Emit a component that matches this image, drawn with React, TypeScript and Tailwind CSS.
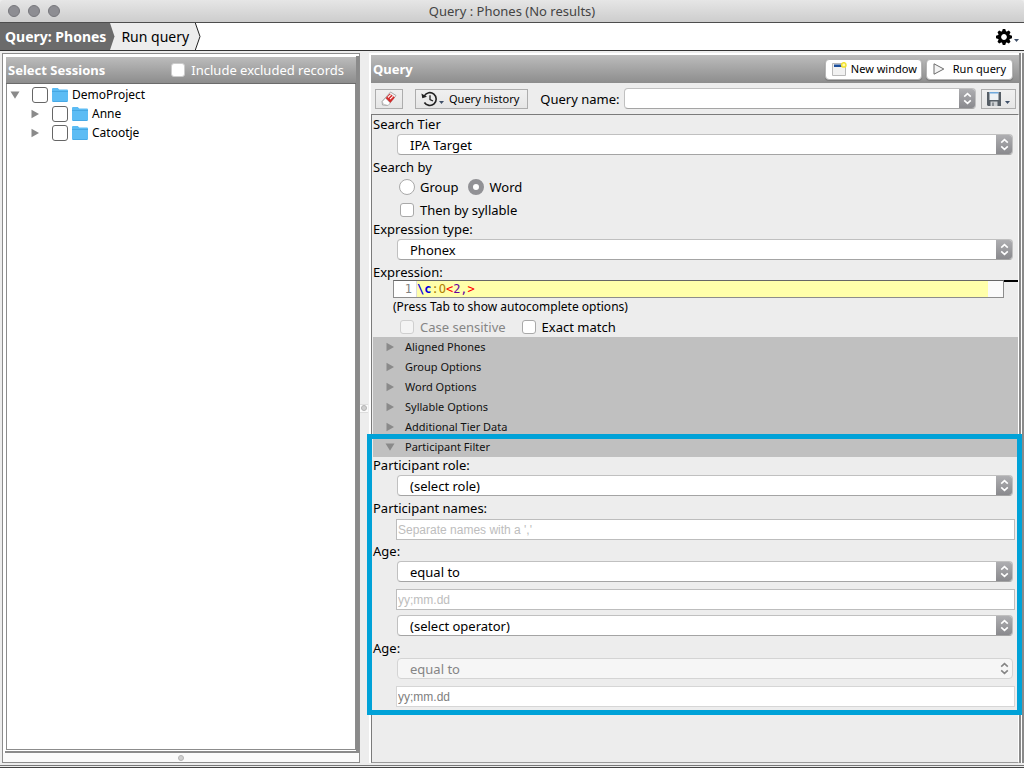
import { useState, type ReactNode } from "react";
import { clsx } from "clsx";

function ChevronPair({ className }: { className?: string }) {
  return (
    <svg width="9" height="13" viewBox="0 0 9 13" fill="none" strokeWidth="1.6" className={className}>
      <path d="M1.2 4.600 4.500 1.600 7.800 4.600M1.200 8.400l3.300 3 3.300-3" />
    </svg>
  );
}

function MenuArrow() {
  return (
    <svg width="5" height="3" viewBox="0 0 5 3" className="shrink-0">
      <path d="M0 0h5L2.500 3z" fill="#3f5069" />
    </svg>
  );
}

function Disclosure({ open }: { open?: boolean }) {
  return (
    <svg width="10" height="10" viewBox="0 0 10 10" className="shrink-0">
      <path d={open ? "M0.500 1.500h9L5 8.800z" : "M1.500 0.700v8.600L9 5z"} fill="#8a8a8a" />
    </svg>
  );
}

function Folder() {
  return (
    <svg width="16" height="14" viewBox="0 0 16 14" className="shrink-0">
      <path d="M0 1Q0 0 1 0h4.800l1.400 1.500H15q1 0 1 1V13q0 1-1 1H1q-1 0-1-1z" fill="#5cbcf4" />
      <path d="M0 3.500h16" stroke="#46a7e2" />
      <path d="M1 13.500h14" stroke="#48a9e6" />
    </svg>
  );
}

function Gear() {
  return (
    <svg width="16" height="16" viewBox="-8 -8 16 16">
      {[0, 45, 90, 135, 180, 225, 270, 315].map((angle) => (
        <path key={angle} d="M-2.200-5-1.200-8h2.400L2.200-5z" transform={`rotate(${angle})`} />
      ))}
      <circle r="4.400" fill="none" stroke="#000" strokeWidth="3" />
    </svg>
  );
}

function Eraser() {
  return (
    <svg width="18" height="16" viewBox="0 0 18 16">
      <path d="M2 10.500 10.500 1l5.500 3.500L8 14.500l-5.500-.5z" fill="#f2f2f2" stroke="#999" strokeWidth=".8" />
      <path d="M5.500 7.200 9.800 2.500l5 4L10.200 12z" fill="#d42b2b" />
      <path d="m8 6.500 2.800-2.800M10 8.200l2.800-2.800" stroke="#fff" strokeWidth="1.100" />
      <path d="m5.500 7.200 4.700 4.800L8 14.500 3 13l-.5-2.500z" fill="#fff" stroke="#aaa" strokeWidth=".6" />
    </svg>
  );
}

function History() {
  return (
    <svg width="17" height="16" viewBox="0 0 17 16" fill="none" stroke="#222" strokeWidth="1.600">
      <path d="M3.300 4.800A6.400 6.400 0 1 1 3.400 11.500" />
      <path d="M9 4.200v4.300l3 1.500" strokeWidth="1.300" />
      <path d="M.4 2.500 1.300 7.300 6 5.700z" fill="#222" stroke="none" />
    </svg>
  );
}

function WindowIcon() {
  return (
    <svg width="15" height="15" viewBox="0 0 15 15">
      <path d="M.5 1.500h13v12H.5z" fill="#f1f1f1" stroke="#b9b9b9" />
      <path d="M2 2.500h8V5H2z" fill="#1d4f9c" />
      <circle cx="11.800" cy="2.900" r="2.200" fill="#fffbb0" stroke="#f2e230" strokeWidth="1.500" />
    </svg>
  );
}

function Play() {
  return (
    <svg width="12" height="12" viewBox="0 0 12 12">
      <path d="M1 .8v10.400L10.800 6z" fill="#f4f4f4" stroke="#6d6d6d" />
    </svg>
  );
}

function Floppy() {
  return (
    <svg width="14" height="14" viewBox="0 0 14 14">
      <path d="M0 0h14v14H1l-1-1z" fill="#565e66" />
      <path d="M2.500 0h9v8h-9z" fill="#eef2f5" />
      <path d="M2.500 0h9v1.500h-9z" fill="#6fa9dc" />
      <path d="M3.500 9.500h7V14h-7z" fill="#cfd2d5" />
      <path d="M5 10.500h2V14H5z" fill="#8b9095" />
    </svg>
  );
}

function SplitterGrip() {
  return <span className="size-1.5 rounded-full border border-[#b4b4b4] bg-[#d0d0d0]" />;
}

function ComboBox({ label, options, disabled }: { label: string; options: string[]; disabled?: boolean }) {
  return (
    <div
      className={clsx(
        "flex h-[21px] min-w-0 flex-1 overflow-hidden rounded border",
        disabled ? "border-[#d4d4d4] bg-[#f6f6f6]" : "border-[#c0c0c0] border-b-[#a4a4a4] bg-white"
      )}
    >
      <select
        aria-label={label}
        disabled={disabled}
        className={clsx("min-w-0 flex-1 appearance-none pl-3 outline-none", disabled && "text-[#858585]")}
      >
        {options.map((option) => (
          <option key={option}>{option}</option>
        ))}
      </select>
      <span
        className={clsx(
          "-my-px -mr-px flex w-[17px] items-center justify-center",
          !disabled && "bg-linear-to-b from-[#b0b0b3] to-[#88888c]"
        )}
      >
        <ChevronPair className={disabled ? "stroke-[#858585]" : "stroke-white"} />
      </span>
    </div>
  );
}

function TextField({ label, placeholder, disabled }: { label: string; placeholder: string; disabled?: boolean }) {
  return (
    <input
      type="text"
      aria-label={label}
      placeholder={placeholder}
      disabled={disabled}
      className={clsx(
        "ml-[23px] mr-[3px] block h-[21px] border bg-white px-px font-['Liberation_Sans',sans-serif] text-[12px] outline-none",
        disabled ? "border-[#d6d6d6] placeholder:text-[#808080]" : "border-[#bdbdbd] placeholder:text-[#bdbdbd]"
      )}
    />
  );
}

function Row({ children }: { children: ReactNode }) {
  return <div className="flex pl-6 pr-[5px]">{children}</div>;
}

function Check({ label, disabled }: { label: string; disabled?: boolean }) {
  return (
    <label className={clsx("flex items-center gap-1.5", disabled && "text-[#858585]")}>
      <input
        type="checkbox"
        disabled={disabled}
        className="size-3.5 appearance-none rounded-[3px] border border-[#a9a9a9] bg-white checked:bg-[#8e8e92] disabled:border-[#cfcfcf] disabled:bg-[#f4f4f4]"
      />
      {label}
    </label>
  );
}

function Radio({ label, checked, onChange }: { label: string; checked: boolean; onChange: () => void }) {
  return (
    <label className="flex items-center gap-[5px]">
      <input
        type="radio"
        name="searchBy"
        checked={checked}
        onChange={onChange}
        className="size-4 appearance-none rounded-full border border-[#a9a9a9] bg-white checked:border-[5px] checked:border-[#919195]"
      />
      {label}
    </label>
  );
}

function TreeNode({ name, open, nested }: { name: string; open?: boolean; nested?: boolean }) {
  return (
    <li className={clsx("flex h-[19px] items-center", nested ? "pl-[23px]" : "pl-[3px]")}>
      <button aria-label={`Toggle ${name}`} className="mr-3">
        <Disclosure open={open} />
      </button>
      <label className="flex items-center gap-1">
        <input
          type="checkbox"
          className="size-4 appearance-none rounded-[3px] border border-[#666] bg-white checked:bg-[#8e8e92]"
        />
        <Folder />
        {name}
      </label>
    </li>
  );
}

function SectionHeader({ title, open }: { title: string; open?: boolean }) {
  return (
    <button
      aria-expanded={!!open}
      className="flex h-5 w-full items-center gap-2.5 bg-[#c0c0c0] pl-3 text-[11px] text-[#111]"
    >
      <Disclosure open={open} />
      {title}
    </button>
  );
}

const labelClass = "h-[18px] leading-4";
const toolButton = "flex h-5 items-center border border-[#adadad] bg-linear-to-b from-[#f0f0f0] to-[#e6e6e6]";
const roundButton =
  "flex h-[21px] items-center rounded border border-[#b5b5b5] bg-white pl-1.5 text-[11px] shadow-[0_1px_1px_#777]";
const ageOperators = ["equal to", "less than", "greater than"];

function SessionsPanel() {
  return (
    <aside className="m-0.5 mr-0 flex w-[358px] shrink-0 flex-col border border-[#8c8c8c] bg-white">
      <div className="ml-0.5 mt-0.5 flex flex-1 flex-col border-r-[3px] border-b-2 border-[#8a8a8a] bg-white p-px pr-0">
        <header className="flex h-[27px] items-center justify-between border-b border-[#6b6b6b] bg-linear-to-b from-[#bcbcbc] to-[#8d8d8d] pl-0.5 pr-3 text-white">
          <h2 className="font-bold">Select Sessions</h2>
          <label className="flex items-center gap-1.5">
            <input type="checkbox" className="size-3.5 appearance-none rounded-[3px] border border-[#ccc] bg-white checked:bg-[#8e8e92]" />
            Include excluded records
          </label>
        </header>
        <ul className="flex-1 border border-t-0 border-[#8c8c8c] pt-px text-[12px]">
          <TreeNode name="DemoProject" open />
          <TreeNode name="Anne" nested />
          <TreeNode name="Catootje" nested />
        </ul>
      </div>
      <div className="flex h-[9px] items-center justify-center bg-[#fafafa]">
        <SplitterGrip />
      </div>
    </aside>
  );
}

function QueryForm() {
  const [searchBy, setSearchBy] = useState("Word");

  return (
    <form className="flex-1 border border-r-white border-[#7b7b7b] border-b-[#999] bg-[#ededed] pt-px pl-px">
      <p className={labelClass}>Search Tier</p>
      <Row>
        <ComboBox label="Search Tier" options={["IPA Target", "IPA Actual", "Orthography"]} />
      </Row>
      <p className={clsx(labelClass, "mt-1")}>Search by</p>
      <div className="flex h-5 items-center gap-2.5 pl-[26px]">
        {["Group", "Word"].map((name) => (
          <Radio key={name} label={name} checked={searchBy === name} onChange={() => setSearchBy(name)} />
        ))}
      </div>
      <div className="mt-[3px] flex h-5 items-center pl-[27px]">
        <Check label="Then by syllable" />
      </div>
      <p className={clsx(labelClass, "mt-px")}>Expression type:</p>
      <Row>
        <ComboBox label="Expression type" options={["Phonex", "Regular expression", "Plain text"]} />
      </Row>
      <p className="mt-1 h-4 leading-4">Expression:</p>
      <div className="flex items-start pl-5">
        <div className="flex h-[18px] flex-1 border border-[#8c8c8c] border-t-[#666] bg-[#fafafa] pr-[15px] font-['DejaVu_Sans_Mono',monospace] text-[12px] leading-4">
          <span className="w-[23px] border-r border-[#ddd] bg-white pr-1 text-right text-[#808080]">1</span>
          <div
            role="textbox"
            aria-label="Expression"
            contentEditable
            suppressContentEditableWarning
            className="flex-1 bg-[#ffffaa] outline-none"
          >
            <span className="font-bold text-[#0000e0]">\c</span>
            <span className="text-[#b08000]">:O</span>
            <span className="text-[#f00]">&lt;</span>
            <span className="text-[#6400a0]">2,</span>
            <span className="text-[#f00]">&gt;</span>
          </div>
        </div>
        <div className="h-0.5 w-3.5 bg-black" />
      </div>
      <p className="h-[18px] pl-5 text-[12px] leading-[18px]">(Press Tab to show autocomplete options)</p>
      <div className="flex h-[21px] items-center gap-4 pl-[27px]">
        <Check label="Case sensitive" disabled />
        <Check label="Exact match" />
      </div>

      <SectionHeader title="Aligned Phones" />
      <SectionHeader title="Group Options" />
      <SectionHeader title="Word Options" />
      <SectionHeader title="Syllable Options" />
      <SectionHeader title="Additional Tier Data" />
      <section className="relative">
        <SectionHeader title="Participant Filter" open />
        <p className={labelClass}>Participant role:</p>
        <Row>
          <ComboBox label="Participant role" options={["(select role)", "Target Child", "Mother", "Father"]} />
        </Row>
        <p className={clsx(labelClass, "mt-1")}>Participant names:</p>
        <div className="mt-px grid">
          <TextField label="Participant names" placeholder="Separate names with a ','" />
        </div>
        <p className={clsx(labelClass, "mt-[3px]")}>Age:</p>
        <Row>
          <ComboBox label="Age comparison" options={ageOperators} />
        </Row>
        <div className="mt-[7px] mb-[5px] grid">
          <TextField label="Age" placeholder="yy;mm.dd" />
        </div>
        <Row>
          <ComboBox label="Operator" options={["(select operator)", "and", "or"]} />
        </Row>
        <p className={clsx(labelClass, "mt-1")}>Age:</p>
        <Row>
          <ComboBox label="Second age comparison" options={ageOperators} disabled />
        </Row>
        <div className="mt-[7px] grid pb-1">
          <TextField label="Second age" placeholder="yy;mm.dd" disabled />
        </div>
        {/* callout frame around the filter */}
        <div className="pointer-events-none absolute -top-[3px] -right-1 -bottom-1 -left-1.5 border-[5px] border-[#00a2d8]" />
      </section>
    </form>
  );
}

function QueryPanel() {
  return (
    <section className="mt-0.5 mb-0.5 flex min-w-0 flex-1 flex-col border-l-2 border-t-2 border-white bg-[#ededed]">
      <header className="flex h-7 items-center gap-1 bg-linear-to-b from-[#bcbcbc] to-[#8d8d8d] pl-0.5 pr-1.5">
        <h2 className="flex-1 font-bold text-white">Query</h2>
        <button className={clsx(roundButton, "gap-1 pr-1")}>
          <WindowIcon />
          New window
        </button>
        <button className={clsx(roundButton, "gap-2 pr-1.5")}>
          <Play />
          Run query
        </button>
      </header>
      <div className="flex h-[31px] items-center pl-1 pr-[3px]">
        <button aria-label="Clear query" className={clsx(toolButton, "mr-3 w-7 justify-center")}>
          <Eraser />
        </button>
        <button className={clsx(toolButton, "mr-3 gap-px pr-2 pl-[5px] text-[11px]")}>
          <History />
          <span className="self-end pb-1">
            <MenuArrow />
          </span>
          <span className="pl-1">Query history</span>
        </button>
        <span className="mr-1">Query name:</span>
        <ComboBox label="Query name" options={[""]} />
        <button aria-label="Save query" className={clsx(toolButton, "ml-[5px] w-[35px] justify-center gap-1")}>
          <Floppy />
          <span className="self-end pb-1">
            <MenuArrow />
          </span>
        </button>
      </div>
      <QueryForm />
    </section>
  );
}

export default function App() {
  return (
    <div className="flex min-h-screen flex-col bg-[#ededed] font-['Noto_Sans',sans-serif] text-[13px] leading-4 text-black">
      <div className="grid h-[23px] grid-cols-[1fr_auto_1fr] items-center rounded-t border-b border-[#4d4d4d] bg-linear-to-b from-[#e6e6e6] to-[#cdcdcd] px-2">
        <div className="flex gap-2">
          <span className="size-3 rounded-full border border-[#77777c] bg-[#8e8e93]" />
          <span className="size-3 rounded-full border border-[#77777c] bg-[#8e8e93]" />
          <span className="size-3 rounded-full border border-[#77777c] bg-[#8e8e93]" />
        </div>
        <h1 className="text-[#444]">Query : Phones (No results)</h1>
      </div>

      <nav className="flex h-7 items-stretch border-b border-[#333] bg-white text-[14px]">
        <a href="#query" className="flex items-center bg-[#6b6b6b] pr-1 pl-[5px] font-bold text-white">
          Query: Phones
        </a>
        <svg width="5" height="27" viewBox="0 0 5 27" className="shrink-0 bg-[#ededed]">
          <path d="M0 0 4.500 13.500 0 27z" fill="#6b6b6b" />
        </svg>
        <a href="#run" className="flex items-center bg-[#ededed] px-1.5">
          Run query
        </a>
        <svg width="6" height="27" viewBox="0 0 6 27" className="shrink-0">
          <path d="M0 0 5 13.500 0 27z" fill="#ededed" />
          <path d="M.3 0 5 13.500 .3 27" fill="none" stroke="#222" />
        </svg>
        <button aria-label="Settings" className="ml-auto flex items-center gap-0.5 pr-[5px]">
          <Gear />
          <span className="self-end pb-2">
            <MenuArrow />
          </span>
        </button>
      </nav>

      <main className="flex flex-1 border-b border-[#777]">
        <SessionsPanel />
        <div className="flex w-[9px] shrink-0 flex-col justify-center">
          <span className="mr-px flex h-[9px] items-center justify-center border-y border-[#ddd] bg-[#fafafa]">
            <SplitterGrip />
          </span>
        </div>
        <QueryPanel />
        <div className="my-0.5 w-[5px] shrink-0 border-x-2 border-[#8a8a8a] bg-white" />
      </main>
      <div className="mt-px h-px bg-[#444]" />
    </div>
  );
}
